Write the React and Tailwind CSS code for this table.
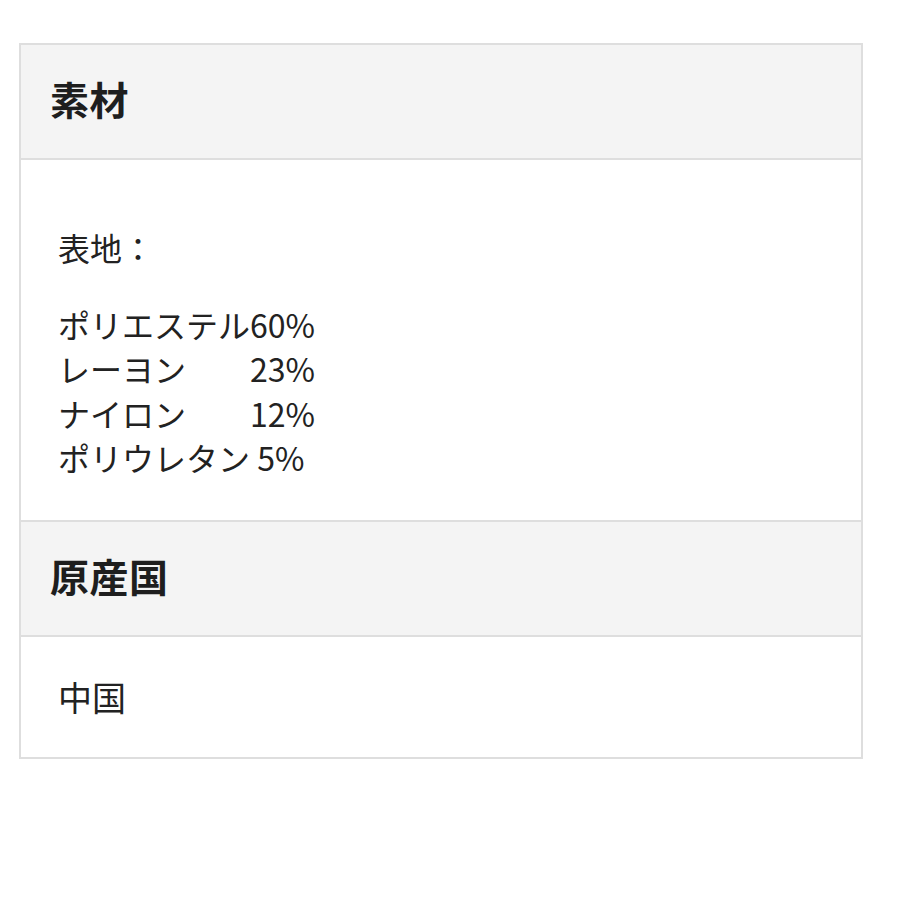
import React from 'react';

const font = { fontFamily: '"Noto Sans CJK JP", "Noto Sans", sans-serif' };

const Header = ({ children }) => (
  <div className="h-[115px] bg-[#f4f4f4] border-b-2 border-[#dedede] flex items-center pl-[29px] pb-[6px]">
    <h2 className="text-[39px] font-bold text-[#1e1e1e] tracking-[0.5px]">{children}</h2>
  </div>
);

export default function App() {
  return (
    <div className="w-[900px] h-[900px] bg-white pt-[43px] pl-[19px]" style={font}>
      <div className="w-[844px] border-2 border-[#dedede]">
        <Header>素材</Header>
        <div className="h-[362px] pl-[37px] pt-[65px] text-[32px] leading-[44.5px] text-[#222] border-b-2 border-[#dedede]">
          <p>表地：</p>
          <p className="mt-[32px] whitespace-pre">ポリエステル60%</p>
          <p className="whitespace-pre">レーヨン　　23%</p>
          <p className="whitespace-pre">ナイロン　　12%</p>
          <p className="whitespace-pre">ポリウレタン 5%</p>
        </div>
        <Header>原産国</Header>
        <div className="h-[120px] flex items-center pl-[37px] pb-[2px] text-[34px] text-[#222]">
          中国
        </div>
      </div>
    </div>
  );
}
